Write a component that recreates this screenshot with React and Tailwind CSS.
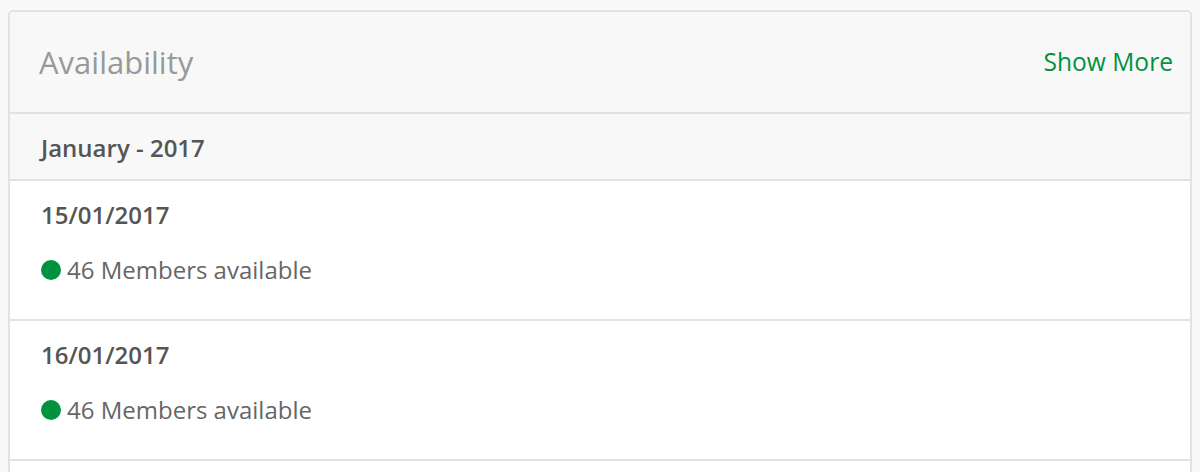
import React from 'react';

const days = [
  { date: '15/01/2017', members: 46 },
  { date: '16/01/2017', members: 46 },
  { date: '17/01/2017', members: 46 },
];

const App = () => {
  return (
    <div className="h-screen overflow-hidden bg-[#f9f9f9] pt-[10px] px-[8px] font-['Open_Sans',sans-serif]">
      <div className="border-2 border-[#e2e2e2] rounded-t-[5px] bg-white overflow-hidden">
        <div className="h-[102px] flex items-center justify-between bg-[#f8f8f8] pl-[29px] pr-[17px] border-b-2 border-[#e2e2e2]">
          <span className="text-[31px] text-[#999999]">Availability</span>
          <a className="text-[24.6px] text-[#00923f] cursor-pointer">Show More</a>
        </div>
        <div className="h-[67px] flex items-center bg-[#f8f8f8] pl-[31px] pt-[3px] border-b-2 border-[#e2e2e2]">
          <span className="text-[24px] font-semibold text-[#555555]">January - 2017</span>
        </div>
        {days.map(day => (
          <div key={day.date} className="h-[140px] pl-[31px] pt-[19px] border-b-2 border-[#e2e2e2] bg-white">
            <div className="text-[24px] font-semibold text-[#555555] leading-[30px]">{day.date}</div>
            <div className="flex items-center gap-[6px] mt-[25px]">
              <span className="w-[20px] h-[20px] rounded-full bg-[#00923f]" />
              <span className="text-[24px] text-[#666666] leading-[30px]">{day.members} Members available</span>
            </div>
          </div>
        ))}
      </div>
    </div>
  );
};

export default App;
